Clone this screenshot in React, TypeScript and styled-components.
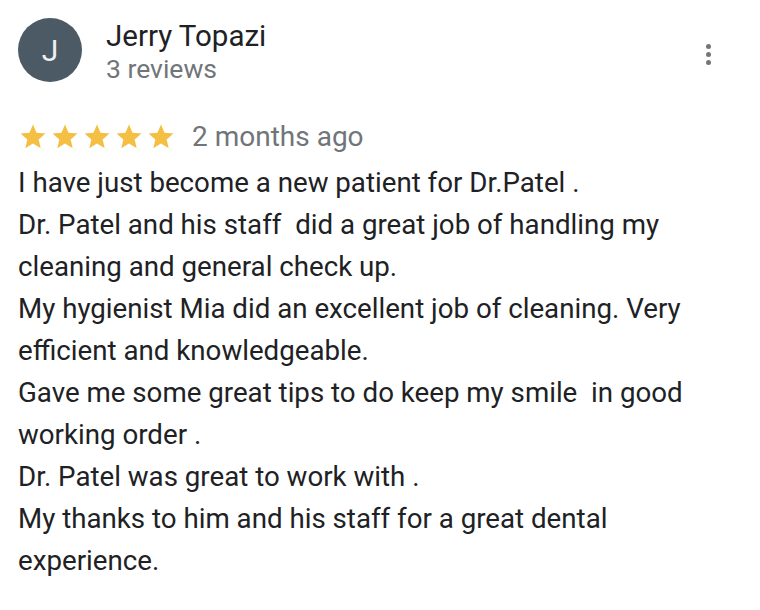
import styled, { createGlobalStyle } from "styled-components";

const GlobalStyle = createGlobalStyle`
    body {
        margin: 0;
        background: #ffffff;
        font-family: Roboto, "Liberation Sans", Arial, sans-serif;
    }
`;

const Card = styled.div`
    padding: 18px 20px 0 18px;
    display: flex;
    flex-direction: column;
`;
const Header = styled.div`
    display: flex;
    align-items: flex-start;
    gap: 24px;
`;
const Avatar = styled.div`
    width: 64px;
    height: 64px;
    border-radius: 50%;
    background: #4b5a65;
    color: #eef0f2;
    font-size: 30px;
    display: flex;
    align-items: center;
    justify-content: center;
    flex-shrink: 0;
`;
const Author = styled.div`
    display: flex;
    flex-direction: column;
    padding-top: 2px;
`;
const Name = styled.span`
    font-size: 29.5px;
    line-height: 33px;
    color: #202124;
`;
const ReviewCount = styled.span`
    font-size: 26.5px;
    line-height: 32px;
    color: #70757a;
`;
const MenuButton = styled.div`
    margin-left: auto;
    margin-right: 20px;
    margin-top: 26px;
    width: 24px;
    display: flex;
    flex-direction: column;
    align-items: center;
    gap: 3px;
    span {
        width: 5px;
        height: 5px;
        border-radius: 50%;
        background: #757575;
    }
`;
const RatingRow = styled.div`
    display: flex;
    align-items: center;
    margin-top: 36px;
    gap: 16px;
`;
const Stars = styled.div`
    display: flex;
    gap: 2px;
`;
const Ago = styled.span`
    font-size: 28px;
    line-height: 32px;
    color: #70757a;
`;
const Body = styled.p`
    margin: 9px 0 0;
    font-size: 27.7px;
    line-height: 42px;
    color: #202124;
    white-space: pre-wrap;
`;

const text = `I have just become a new patient for Dr.Patel .
Dr. Patel and his staff  did a great job of handling my cleaning and general check up.
My hygienist Mia did an excellent job of cleaning. Very efficient and knowledgeable.
Gave me some great tips to do keep my smile  in good working order .
Dr. Patel was great to work with .
My thanks to him and his staff for a great dental experience.`;

function Star() {
    return (
        <svg width="30" height="30" viewBox="0 0 24 24">
            <path fill="#f4bf42" d="M12 17.27L18.18 21l-1.64-7.03L22 9.24l-7.19-.61L12 2 9.19 8.63 2 9.24l5.46 4.73L5.82 21z" />
        </svg>
    );
}

export default function App() {
    return (
        <>
            <GlobalStyle />
            <Card>
                <Header>
                    <Avatar>J</Avatar>
                    <Author>
                        <Name>Jerry Topazi</Name>
                        <ReviewCount>3 reviews</ReviewCount>
                    </Author>
                    <MenuButton><span /><span /><span /></MenuButton>
                </Header>
                <RatingRow>
                    <Stars>{[0, 1, 2, 3, 4].map(i => <Star key={i} />)}</Stars>
                    <Ago>2 months ago</Ago>
                </RatingRow>
                <Body>{text}</Body>
            </Card>
        </>
    );
}
